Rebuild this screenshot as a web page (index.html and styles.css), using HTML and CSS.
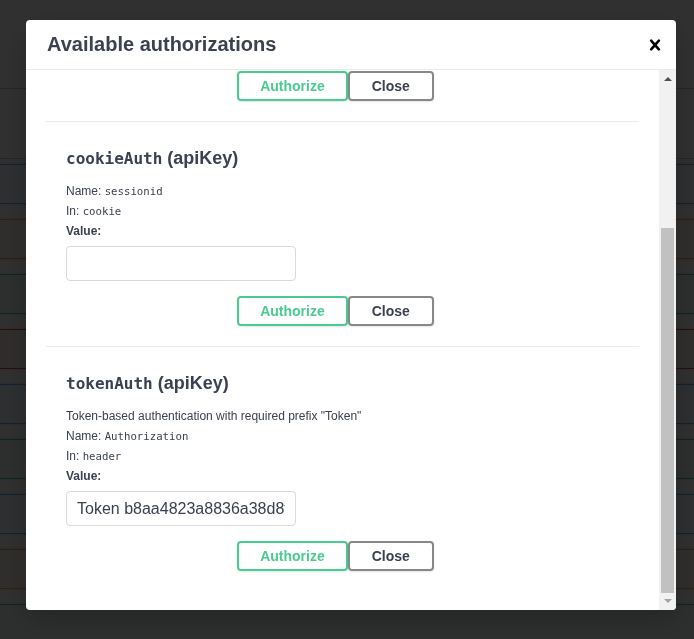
FILE: index.html
```html
<!DOCTYPE html>
<html lang="en">
<head>
<meta charset="utf-8">
<title>Available authorizations</title>
<link rel="stylesheet" href="styles.css">
</head>
<body>
<div class="page">
  <div class="info"></div>
  <div class="tag"></div>
  <div class="ops">
    <div class="op get"></div>
    <div class="op put"></div>
    <div class="op post"></div>
    <div class="op delete"></div>
    <div class="op get"></div>
    <div class="op post"></div>
    <div class="op get"></div>
    <div class="op put"></div>
    <div class="op post"></div>
  </div>
</div>

<div class="dialog">
  <div class="backdrop"></div>
  <div class="modal">
    <div class="modal-header">
      <h3>Available authorizations</h3>
      <button class="close-modal" type="button" aria-label="Close">
        <svg width="22" height="22" viewBox="0 0 20 20" aria-hidden="true"><path d="M14.348 14.849a1.2 1.2 0 0 1-1.697 0L10 11.819l-2.651 3.029a1.2 1.2 0 1 1-1.697-1.697l2.758-3.15-2.759-3.152a1.2 1.2 0 1 1 1.697-1.697L10 8.183l2.651-3.031a1.2 1.2 0 1 1 1.697 1.697l-2.758 3.152 2.758 3.15a1.2 1.2 0 0 1 0 1.698z"/></svg>
      </button>
    </div>
    <div class="modal-body">
      <div class="modal-content">
        <div class="auth-container partial">
          <div class="btn-wrapper">
            <button class="btn auth" type="button">Authorize</button>
            <button class="btn done" type="button">Close</button>
          </div>
        </div>

        <div class="auth-container">
          <h4><code>cookieAuth</code> (apiKey)</h4>
          <div class="auth-info">
            <p class="row">Name: <code>sessionid</code></p>
            <p class="row">In: <code>cookie</code></p>
          </div>
          <label class="value-label">Value:</label>
          <input class="value-input" type="text" value="">
          <div class="btn-wrapper">
            <button class="btn auth" type="button">Authorize</button>
            <button class="btn done" type="button">Close</button>
          </div>
        </div>

        <div class="auth-container">
          <h4><code>tokenAuth</code> (apiKey)</h4>
          <p class="desc">Token-based authentication with required prefix "Token"</p>
          <div class="auth-info">
            <p class="row">Name: <code>Authorization</code></p>
            <p class="row">In: <code>header</code></p>
          </div>
          <label class="value-label">Value:</label>
          <input class="value-input" type="text" value="Token b8aa4823a8836a38d8f1e0c7a5b2">
          <div class="btn-wrapper">
            <button class="btn auth" type="button">Authorize</button>
            <button class="btn done" type="button">Close</button>
          </div>
        </div>
      </div>
      <div class="scrollbar" aria-hidden="true">
        <div class="sb-btn">
          <svg width="8" height="5" viewBox="0 0 8 5"><path d="M0 5L4 1L8 5Z" fill="#505050"/></svg>
        </div>
        <div class="sb-track"><div class="sb-thumb"></div></div>
        <div class="sb-btn">
          <svg width="8" height="5" viewBox="0 0 8 5"><path d="M0 0L4 4L8 0Z" fill="#a3a3a3"/></svg>
        </div>
      </div>
    </div>
  </div>
</div>
</body>
</html>
```

FILE: styles.css
```css
html, body {
  margin: 0;
  padding: 0;
  height: 100%;
  overflow: hidden;
  background: #fff;
  font-family: "Liberation Sans", Arial, sans-serif;
}

/* background swagger page */
.page {
  margin: 0 -4px;
}
.info {
  height: 88px;
  border-bottom: 1px solid rgba(59, 65, 81, 0.3);
}
.tag {
  height: 69px;
  border-bottom: 1px solid rgba(59, 65, 81, 0.3);
}
.ops {
  padding-top: 5px;
}
.op {
  height: 38px;
  margin-bottom: 15px;
  border: 1px solid;
  border-radius: 4px;
  box-shadow: 0 0 3px rgba(0, 0, 0, 0.19);
}
.op.get { background: rgba(97, 175, 254, 0.1); border-color: #61affe; }
.op.post { background: rgba(73, 204, 144, 0.1); border-color: #49cc90; }
.op.put { background: rgba(252, 161, 48, 0.1); border-color: #fca130; }
.op.delete { background: rgba(249, 62, 62, 0.1); border-color: #f93e3e; }

/* dialog */
.dialog {
  position: fixed;
  inset: 0;
}
.backdrop {
  position: absolute;
  inset: 0;
  background: rgba(0, 0, 0, 0.81);
}
.modal {
  position: absolute;
  left: 26px;
  top: 20px;
  width: 650px;
  background: #fff;
  border-radius: 4px;
  box-shadow: 0 10px 30px 0 rgba(0, 0, 0, 0.2);
  overflow: hidden;
}
.modal-header {
  display: flex;
  align-items: center;
  padding: 12px 0;
  border-bottom: 1px solid #ebebeb;
}
.modal-header h3 {
  flex: 1;
  margin: 0;
  padding: 0 21px;
  font-size: 20px;
  line-height: 25px;
  font-weight: 700;
  color: #3b4151;
}
.close-modal {
  display: flex;
  align-items: center;
  background: none;
  border: none;
  padding: 0 10px;
  margin: 0;
  cursor: pointer;
}
.close-modal svg {
  display: block;
  fill: #000;
}

.modal-body {
  display: flex;
  height: 540px;
}
.modal-content {
  flex: 1;
  min-width: 0;
  padding: 0 20px 20px;
  overflow: hidden;
}

/* fake classic scrollbar (content shown scrolled to the bottom) */
.scrollbar {
  width: 17px;
  flex: none;
  display: flex;
  flex-direction: column;
  background: #f1f1f1;
}
.sb-btn {
  height: 17px;
  display: flex;
  align-items: center;
  justify-content: center;
}
.sb-btn svg {
  display: block;
}
.sb-track {
  flex: 1;
  display: flex;
  flex-direction: column;
  justify-content: flex-end;
}
.sb-thumb {
  height: 365px;
  margin: 0 2px;
  background: #c1c1c1;
}

.auth-container {
  padding: 10px 20px;
  border-bottom: 1px solid #ebebeb;
  color: #3b4151;
}
.auth-container.partial {
  padding-top: 0;
}
.auth-container.partial .btn-wrapper {
  padding-top: 1px;
}
.auth-container:last-child {
  border-bottom: none;
}
.auth-container h4 {
  margin: 15px 0 0;
  font-size: 18px;
  line-height: 22px;
  font-weight: 700;
  color: #3b4151;
}
.auth-container h4 code {
  font-family: "DejaVu Sans Mono", monospace;
  font-size: 16px;
  font-weight: 700;
}
.desc {
  margin: 11px 0 0;
  font-size: 12px;
  line-height: 20px;
}
.auth-info {
  margin-top: 11px;
}
.desc + .auth-info {
  margin-top: 0;
}
.row {
  margin: 0;
  font-size: 12px;
  line-height: 20px;
}
.row code {
  font-family: "DejaVu Sans Mono", monospace;
  font-size: 10.7px;
  line-height: 1;
}
.value-label {
  display: block;
  font-size: 12px;
  line-height: 20px;
  font-weight: 700;
}
.value-input {
  display: block;
  box-sizing: border-box;
  width: 230px;
  height: 35px;
  margin: 5px 0;
  padding: 8px 10px;
  border: 1px solid #d9d9d9;
  border-radius: 4px;
  background: #fff;
  font-family: "Liberation Sans", Arial, sans-serif;
  font-size: 16px;
  color: #3b4151;
  outline: none;
}
.btn-wrapper {
  display: flex;
  justify-content: center;
  padding: 10px 0;
}
.btn {
  box-sizing: border-box;
  height: 30px;
  padding: 5px 21px;
  border: 2px solid #888;
  border-radius: 4px;
  background: transparent;
  box-shadow: 0 1px 2px rgba(0, 0, 0, 0.1);
  font-family: "Liberation Sans", Arial, sans-serif;
  font-size: 14px;
  line-height: 16px;
  font-weight: 700;
  color: #3b4151;
  cursor: pointer;
}
.btn.auth {
  border-color: #49cc90;
  color: #49cc90;
}
.btn.done {
  margin-right: 14px;
  padding: 5px 22px;
}
```
